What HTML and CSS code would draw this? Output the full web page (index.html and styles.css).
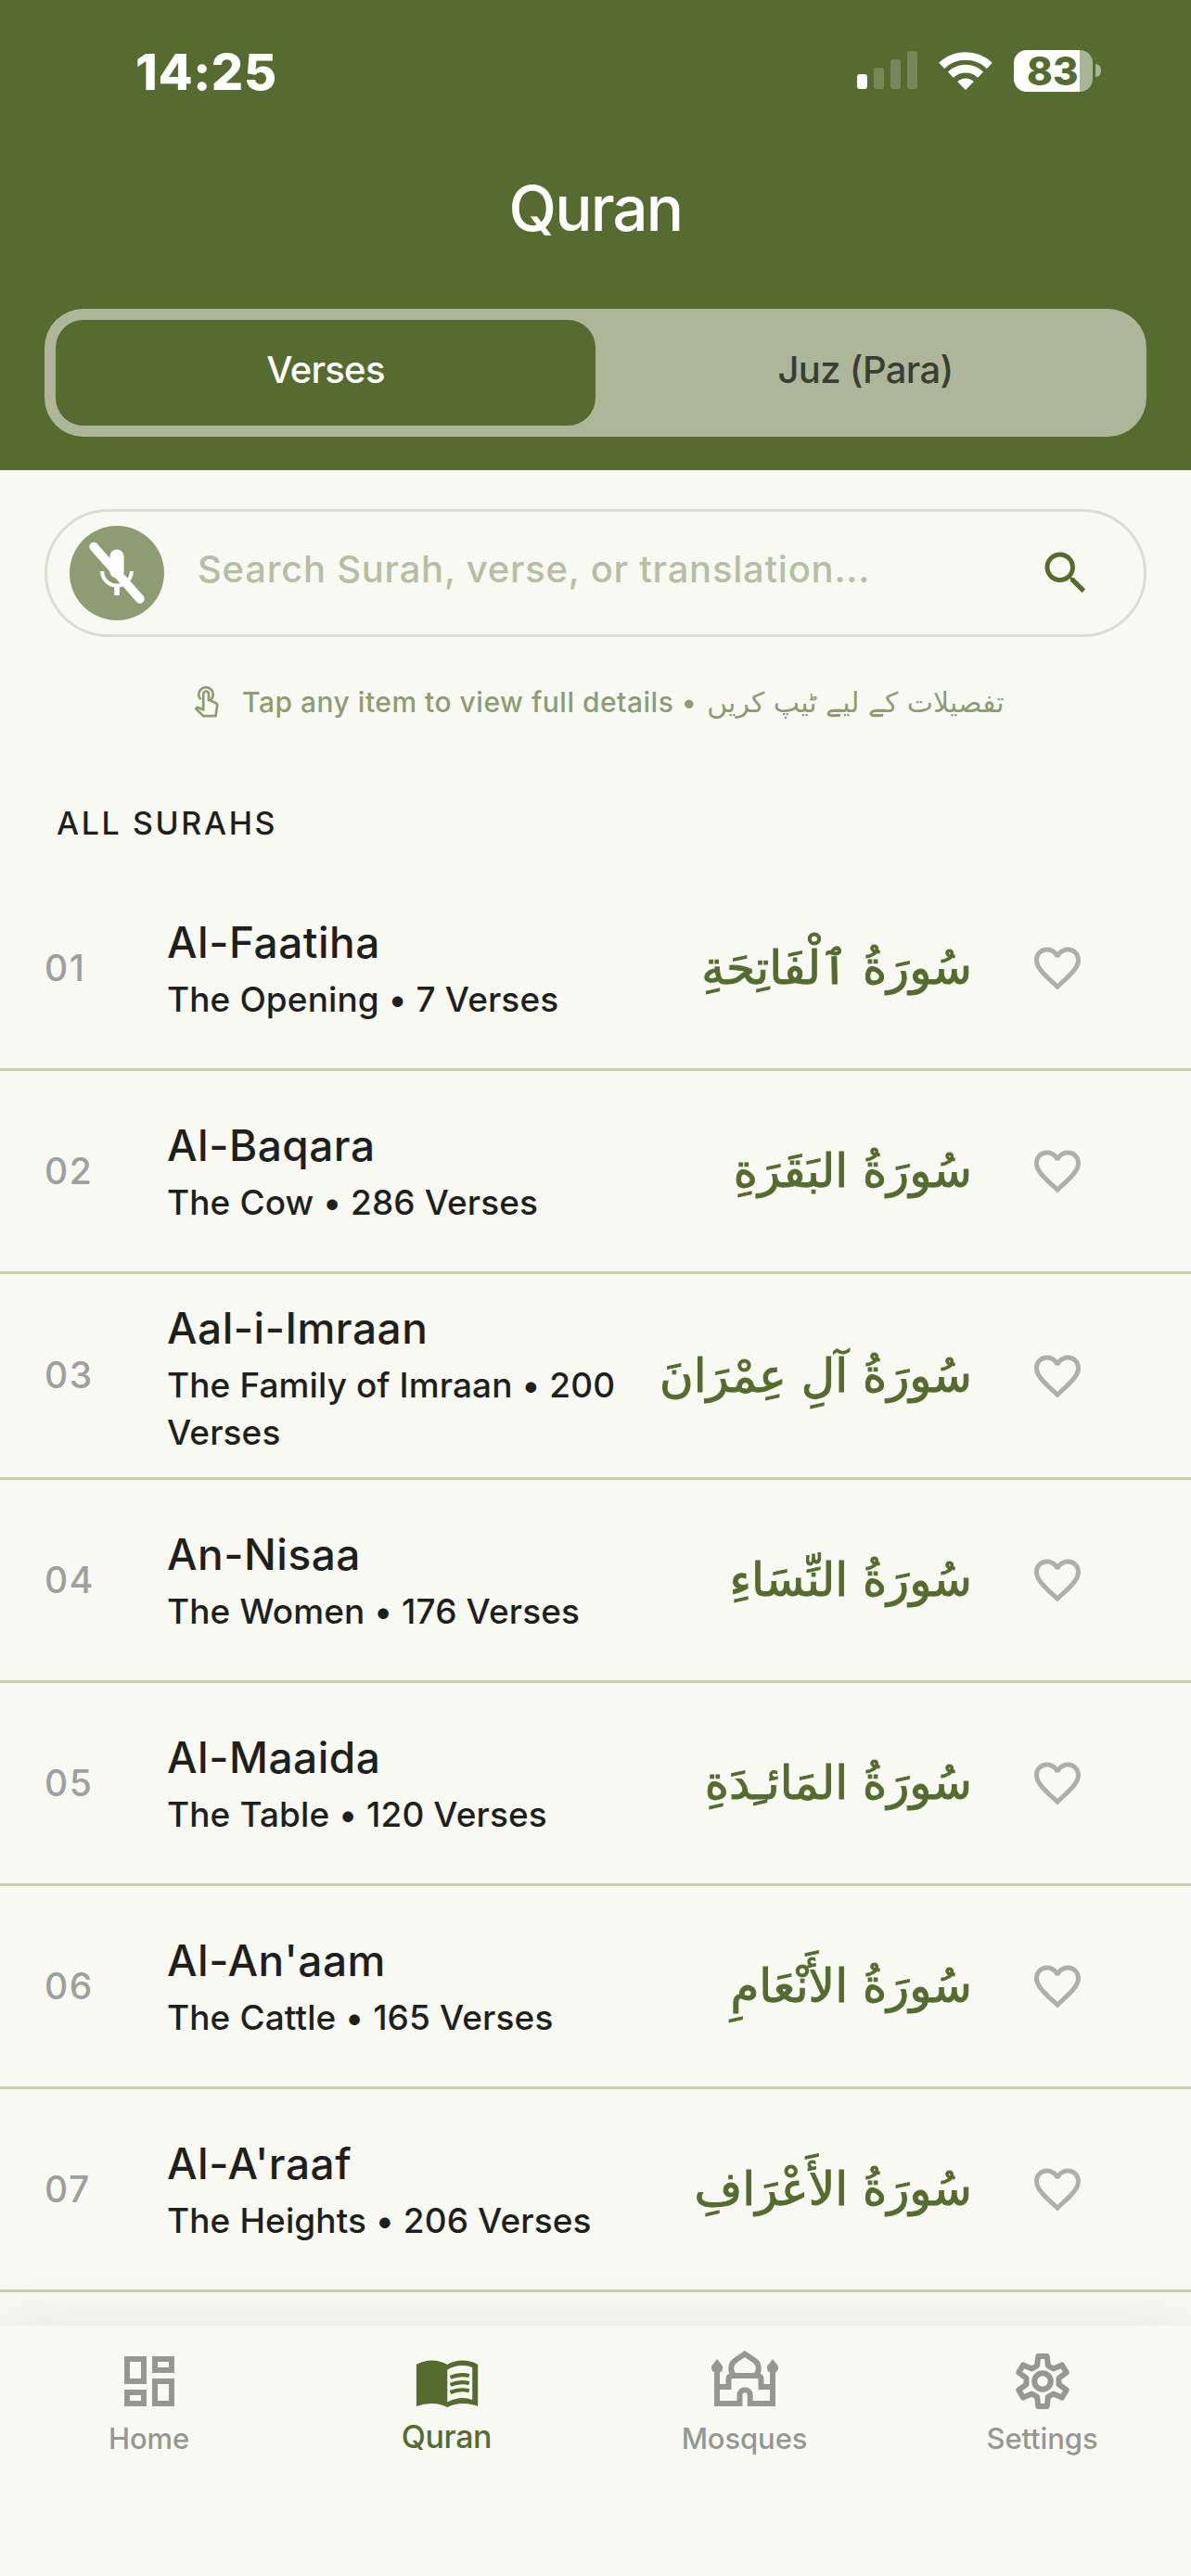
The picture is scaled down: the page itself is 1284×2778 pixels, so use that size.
FILE: index.html
```html
<!DOCTYPE html>
<html lang="en">
<head>
  <meta charset="UTF-8">
  <title>Quran</title>
  <link rel="stylesheet" href="styles.css">
</head>
<body>
  <svg width="0" height="0" class="sprite">
    <symbol id="heart" viewBox="0 0 24 24">
      <path d="M16.5 3c-1.74 0-3.41.81-4.5 2.09C10.91 3.81 9.24 3 7.5 3 4.42 3 2 5.42 2 8.5c0 3.78 3.4 6.86 8.55 11.54L12 21.35l1.45-1.32C18.6 15.36 22 12.28 22 8.5 22 5.42 19.58 3 16.5 3zm-4.4 15.55l-.1.1-.1-.1C7.14 14.24 4 11.39 4 8.5 4 6.5 5.5 5 7.5 5c1.54 0 3.04.99 3.57 2.36h1.87C13.46 5.99 14.96 5 16.5 5c2 0 3.5 1.5 3.5 3.5 0 2.89-3.14 5.74-7.9 10.05z"/>
    </symbol>
  </svg>

  <header class="header">
    <div class="status">
      <span class="time">14:25</span>
      <div class="status-icons">
        <svg width="66" height="42" viewBox="0 0 66 42" fill="#fff">
          <rect x="0" y="25" width="11" height="16" rx="3"/>
          <rect x="18" y="18" width="11" height="23" rx="3" opacity=".2"/>
          <rect x="36" y="9" width="11" height="32" rx="3" opacity=".2"/>
          <rect x="54" y="0" width="11" height="41" rx="3" opacity=".2"/>
        </svg>
        <svg class="wifi" width="58" height="42" viewBox="0 0 58 42" fill="none" stroke="#fff" stroke-width="8.6">
          <path d="M3.2 15.8A37.5 37.5 0 0 1 54.8 15.8"/>
          <path d="M12.9 25.6A23.3 23.3 0 0 1 45.1 25.6"/>
          <path d="M20.2 33A12.6 12.6 0 0 1 37.8 33L29 42z" fill="#fff" stroke="none"/>
        </svg>
        <div class="battery"><span>83</span></div>
        <div class="battery-tip"></div>
      </div>
    </div>
    <h1>Quran</h1>
    <div class="tabs">
      <div class="tab active">Verses</div>
      <div class="tab">Juz (Para)</div>
    </div>
  </header>

  <main class="content">
    <div class="search">
      <div class="mic">
        <svg width="102" height="102" viewBox="0 0 102 102" fill="none" stroke="#fff">
          <rect x="43.4" y="25.6" width="15.2" height="31" rx="7.6" fill="#fff" stroke="none"/>
          <path d="M35.2 49a15.8 15.6 0 0 0 31.6 0" stroke-width="4"/>
          <path d="M51 64v11" stroke-width="5.6"/>
          <path d="M26 22.5l50 56.5" stroke-width="9.5" stroke-linecap="round"/>
        </svg>
      </div>
      <span class="placeholder">Search Surah, verse, or translation...</span>
      <svg class="search-icon" width="60" height="60" viewBox="0 0 24 24" fill="#556b2f">
        <path d="M15.5 14h-.79l-.28-.27C15.41 12.59 16 11.11 16 9.5 16 5.91 13.09 3 9.5 3S3 5.91 3 9.5 5.91 16 9.5 16c1.61 0 3.09-.59 4.23-1.57l.27.28v.79l5 4.99L20.49 19l-4.99-5zm-6 0C7.01 14 5 11.99 5 9.5S7.01 5 9.5 5 14 7.01 14 9.5 11.99 14 9.5 14z"/>
      </svg>
    </div>

    <div class="hint">
      <svg width="30" height="38" viewBox="0 0 30 38" fill="none" stroke="#8e9c74" stroke-width="2.7" stroke-linejoin="round">
        <path d="M8.4 16.4A7.8 7.8 0 1 1 19.6 16.4"/>
        <path d="M11.2 27.5V10.4a2.9 2.9 0 0 1 5.8 0v6.8h1.6l6.2 3q1.6.9 1.4 2.6L24.5 34.2H11.3L3.2 26.4l1.6-1.6z"/>
      </svg>
      <span class="hint-text">Tap any item to view full details •</span>
      <span class="urdu" lang="ur" dir="rtl">تفصیلات کے لیے ٹیپ کریں</span>
    </div>

    <h2>ALL SURAHS</h2>

    <ul class="list">
      <li>
        <span class="num">01</span>
        <div class="info"><div class="name">Al-Faatiha</div><div class="sub">The Opening • 7 Verses</div></div>
        <span class="arabic" lang="ar" dir="rtl">سُورَةُ ٱلْفَاتِحَةِ</span>
        <svg class="heart"><use href="#heart"/></svg>
      </li>
      <li>
        <span class="num">02</span>
        <div class="info"><div class="name">Al-Baqara</div><div class="sub">The Cow • 286 Verses</div></div>
        <span class="arabic" lang="ar" dir="rtl">سُورَةُ البَقَرَةِ</span>
        <svg class="heart"><use href="#heart"/></svg>
      </li>
      <li class="tall">
        <span class="num">03</span>
        <div class="info"><div class="name">Aal-i-Imraan</div><div class="sub">The Family of Imraan • 200 Verses</div></div>
        <span class="arabic" lang="ar" dir="rtl">سُورَةُ آلِ عِمْرَانَ</span>
        <svg class="heart"><use href="#heart"/></svg>
      </li>
      <li>
        <span class="num">04</span>
        <div class="info"><div class="name">An-Nisaa</div><div class="sub">The Women • 176 Verses</div></div>
        <span class="arabic" lang="ar" dir="rtl">سُورَةُ النِّسَاءِ</span>
        <svg class="heart"><use href="#heart"/></svg>
      </li>
      <li>
        <span class="num">05</span>
        <div class="info"><div class="name">Al-Maaida</div><div class="sub">The Table • 120 Verses</div></div>
        <span class="arabic" lang="ar" dir="rtl">سُورَةُ المَائـِدَةِ</span>
        <svg class="heart"><use href="#heart"/></svg>
      </li>
      <li>
        <span class="num">06</span>
        <div class="info"><div class="name">Al-An'aam</div><div class="sub">The Cattle • 165 Verses</div></div>
        <span class="arabic" lang="ar" dir="rtl">سُورَةُ الأَنْعَامِ</span>
        <svg class="heart"><use href="#heart"/></svg>
      </li>
      <li>
        <span class="num">07</span>
        <div class="info"><div class="name">Al-A'raaf</div><div class="sub">The Heights • 206 Verses</div></div>
        <span class="arabic" lang="ar" dir="rtl">سُورَةُ الأَعْرَافِ</span>
        <svg class="heart"><use href="#heart"/></svg>
      </li>
    </ul>
  </main>

  <nav class="nav">
    <a class="nav-item">
      <svg width="72" height="72" viewBox="0 0 24 24" fill="#959790">
        <path d="M19 5v2h-4V5h4M9 5v6H5V5h4m10 8v6h-4v-6h4M9 17v2H5v-2h4M21 3h-8v6h8V3zM11 3H3v10h8V3zm10 8h-8v10h8V11zm-10 4H3v6h8v-6z"/>
      </svg>
      <span>Home</span>
    </a>
    <a class="nav-item active">
      <svg width="72" height="72" viewBox="-2.5 -13 72 72">
        <path fill="#556b2f" fill-rule="evenodd" d="M.4 5Q8 .4 17 .4T33.6 5Q41 .4 50 .4T66.7 5V50Q58 47 50 47T33.6 51Q26 47 17 47T.4 50zM33.8 10.5V45.5Q42 41 50 41 56 41 60.7 43V8Q56 6 50 6 41 6 33.8 10.5z"/>
        <path fill="none" stroke="#556b2f" stroke-width="4.2" d="M37 18.8q10-4.4 20.3-1.8M37 26.9q10-4.4 20.3-1.8M37 35q10-4.4 20.3-1.8"/>
      </svg>
      <span>Quran</span>
    </a>
    <a class="nav-item">
      <svg width="72" height="72" viewBox="0.3 -3 72 72" fill="none" stroke="#959790" stroke-width="6">
        <path d="M6.3 20V57H30.8V48a5.6 5.8 0 0 1 11.2 0V57H66.3V20"/>
        <path d="M6.3 39H18.8V31q0-4 4-4H49.8q4 0 4 4V39H66.3"/>
        <path d="M24.5 27C20 21.5 20.5 13.5 27 9.8L36.3 3.6 45.6 9.8C52.1 13.5 52.6 21.5 48.1 27"/>
        <path fill="#959790" stroke="none" d="M6.4 9L11.5 15.5Q14 19 10.6 23H2.2Q-1.2 19 1.3 15.5zM66.3 9L71.4 15.5Q73.9 19 70.5 23H62.1Q58.7 19 61.2 15.5z"/>
      </svg>
      <span>Mosques</span>
    </a>
    <a class="nav-item">
      <svg width="72" height="72" viewBox="-36 -36 72 72" fill="none" stroke="#959790" stroke-width="6" stroke-linejoin="round">
        <path d="M-5.9-16.8L-4.7-27H4.7L5.9-16.8 11.6-13.5 21-17.6 25.7-9.4 17.5-3.3V3.3L25.7 9.4 21 17.6 11.6 13.5 5.9 16.8 4.7 27H-4.7L-5.9 16.8-11.6 13.5-21 17.6-25.7 9.4-17.5 3.3V-3.3L-25.7-9.4-21-17.6-11.6-13.5z"/>
        <circle r="8.8"/>
      </svg>
      <span>Settings</span>
    </a>
  </nav>
</body>
</html>
```
FILE: styles.css
```css
* {
  box-sizing: border-box;
}
body {
  margin: 0;
  width: 1284px;
  height: 2778px;
  overflow: hidden;
  display: flex;
  flex-direction: column;
  background-color: #f8f9f3;
  color: #1f1f1d;
  font-family: Inter, "DejaVu Sans", sans-serif;
  font-weight: 500;
}
h1, h2, ul {
  margin: 0;
  padding: 0;
  font-weight: 500;
}
svg {
  display: block;
  flex: none;
}
.sprite {
  position: absolute;
}

/* header */
.header {
  height: 507px;
  padding: 0 48px;
  background-color: #556b2f;
  color: #fff;
}
.status {
  height: 152px;
  padding: 0 49px 0 98px;
  display: flex;
  align-items: center;
  justify-content: space-between;
}
.time {
  padding-top: 2px;
  font-size: 54px;
  font-weight: 800;
  letter-spacing: 0.6px;
}
.status-icons {
  display: flex;
  align-items: center;
}
.wifi {
  margin: 0 23px 0 22px;
}
.battery {
  width: 85px;
  height: 45px;
  padding-left: 14px;
  border-radius: 14px;
  background: linear-gradient(to right, #fff 71px, #aab597 71px);
  color: #556b2f;
  font-size: 42px;
  font-weight: 800;
  line-height: 45px;
}
.battery-tip {
  width: 6px;
  height: 14px;
  margin-left: 3px;
  border-radius: 0 6px 6px 0;
  background-color: #aab597;
}
h1 {
  height: 181px;
  padding-top: 33px;
  text-align: center;
  font-size: 67px;
  line-height: 80px;
  letter-spacing: -1.8px;
}
.tabs {
  height: 138px;
  padding: 12px;
  display: flex;
  border-radius: 42px;
  background-color: #adb699;
}
.tab {
  flex: 1;
  border-radius: 30px;
  text-align: center;
  font-size: 40px;
  line-height: 108px;
  letter-spacing: -0.7px;
  color: #3b3f33;
}
.tab.active {
  background-color: #556b2f;
  color: #fff;
}

/* search */
.content {
  flex: 1;
  padding-top: 42px;
}
.search {
  height: 138px;
  margin: 0 48px;
  padding: 0 54px 0 24px;
  display: flex;
  align-items: center;
  border: 3px solid #dadece;
  border-radius: 69px;
}
.mic {
  width: 102px;
  height: 102px;
  border-radius: 50%;
  background-color: #8e9c74;
}
.placeholder {
  flex: 1;
  padding-left: 36px;
  padding-bottom: 10px;
  color: #b6bfa3;
  font-size: 40px;
  letter-spacing: 0.75px;
}
.hint {
  height: 50px;
  margin-top: 45px;
  padding-left: 208px;
  display: flex;
  align-items: center;
  color: #8e9c74;
}
.hint-text {
  margin-left: 23px;
  font-size: 30px;
  letter-spacing: 0.5px;
}
.urdu {
  margin-left: 11px;
  font-family: "DejaVu Sans", sans-serif;
  font-size: 30px;
}
h2 {
  height: 154px;
  padding: 84px 0 0 61px;
  font-size: 34px;
  line-height: 44px;
  letter-spacing: 2.6px;
}

/* surah list */
.list {
  list-style: none;
}
.list li {
  height: 219px;
  padding: 0 114px 0 48px;
  display: flex;
  align-items: center;
  border-bottom: 3px solid #c8cfa9;
}
.list li.tall {
  height: 222px;
}
.num {
  width: 132px;
  padding-bottom: 2px;
  color: #9f9f9f;
  font-size: 39px;
  letter-spacing: 1.5px;
}
.info {
  flex: 1;
}
.tall .info {
  padding-top: 4px;
}
.name {
  font-size: 46px;
  line-height: 62px;
  letter-spacing: 0.5px;
}
.sub {
  margin-top: 5px;
  font-size: 37px;
  line-height: 51px;
  letter-spacing: 0.1px;
}
.arabic {
  margin: 0 62px 0 30px;
  color: #556b2f;
  font-family: "DejaVu Sans", sans-serif;
  font-size: 50px;
  line-height: 70px;
  white-space: nowrap;
  -webkit-text-stroke: 1px #556b2f;
}
.heart {
  width: 60px;
  height: 60px;
  fill: #aeafaa;
}

/* bottom nav */
.nav {
  position: relative;
  height: 270px;
  padding-top: 24px;
  display: flex;
  background-color: #f8f9f3;
  box-shadow: 0 0 60px rgba(0, 0, 0, 0.08);
}
.nav-item {
  flex: 1;
  display: flex;
  flex-direction: column;
  align-items: center;
  color: #959790;
  font-size: 31px;
  letter-spacing: -0.1px;
}
.nav-item span {
  margin-top: 8px;
  line-height: 36px;
}
.nav-item.active {
  color: #556b2f;
  font-size: 34px;
  letter-spacing: -0.4px;
}
.nav-item.active span {
  margin-top: 6px;
}
```
